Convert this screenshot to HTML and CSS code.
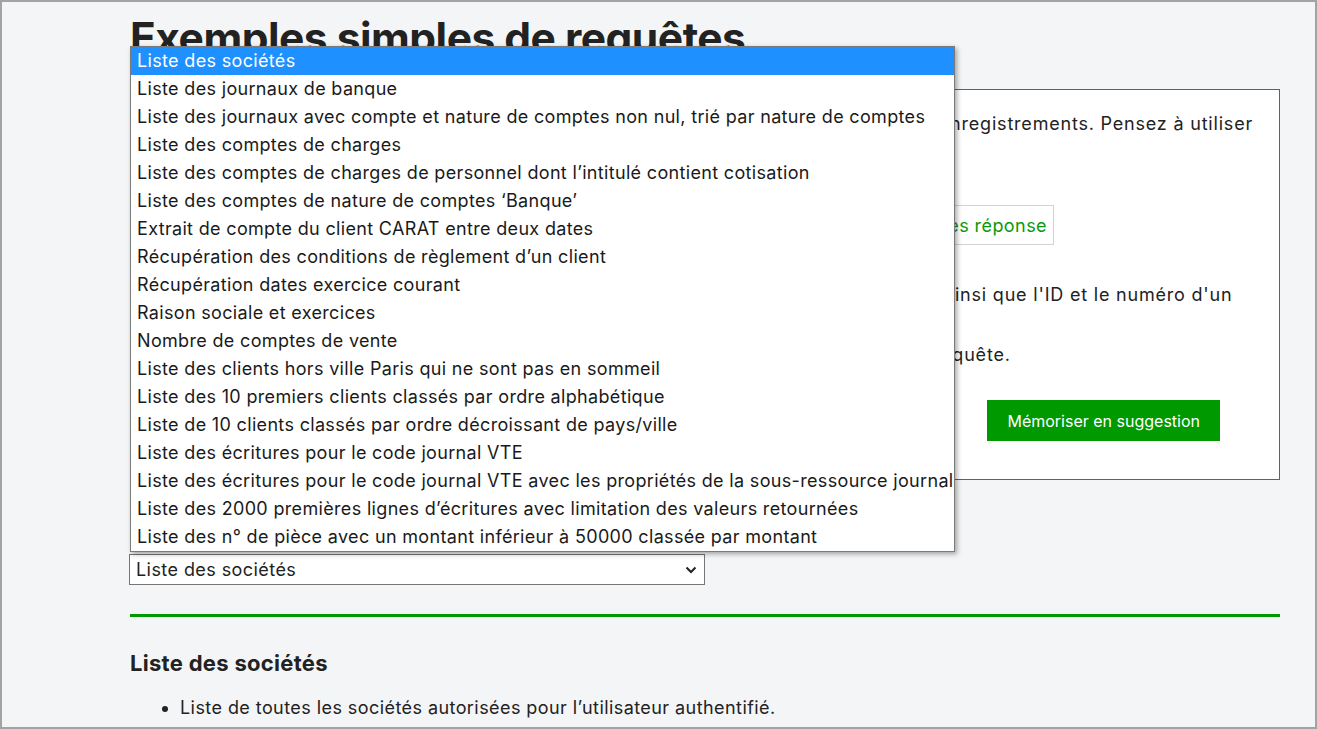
FILE: index.html
```html
<!DOCTYPE html>
<html lang="fr">
<head>
<meta charset="utf-8">
<title>Exemples simples de requêtes</title>
<link rel="stylesheet" href="styles.css">
</head>
<body>
<div class="frame">
  <main class="content">
    <h1 class="title">Exemples simples de requêtes</h1>

    <section class="card">
      <p class="card-text">Par défaut les requêtes émises à l'API renvoient une page incluant au maximum cent enregistrements. Pensez à utiliser<br>les paramètres de pagination pour obtenir la suite.</p>
      <div class="link-row">
        <a class="outline-btn">Exécuter la requête</a>
        <a class="outline-btn">Copier l'URL de la requête</a>
        <a class="outline-btn">Afficher les en-têtes réponse</a>
      </div>
      <p class="card-text spaced">La réponse donne au format JSON la liste des sociétés et leurs propriétés générales, ainsi que l'ID et le numéro d'un<br>élément permettant d'identifier la société interrogée.<br>Ces informations sont nécessaires pour construire l'URL des appels futurs sur cette requête.</p>
      <div class="actions">
        <button class="primary-btn">Mémoriser en suggestion</button>
      </div>
    </section>

    <label class="select-label">Choisissez un exemple de requête :</label>
    <div class="select">
      <span>Liste des sociétés</span>
      <svg class="chevron" width="12" height="8" viewBox="0 0 12 8"><path d="M1.5 1.5 L6 6 L10.5 1.5" fill="none" stroke="#222" stroke-width="2"/></svg>
    </div>

    <hr class="divider">

    <h2 class="subtitle">Liste des sociétés</h2>
    <ul class="bullets">
      <li>Liste de toutes les sociétés autorisées pour l’utilisateur authentifié.</li>
    </ul>

    <ul class="dropdown">
      <li class="opt selected">Liste des sociétés</li>
      <li class="opt">Liste des journaux de banque</li>
      <li class="opt">Liste des journaux avec compte et nature de comptes non nul, trié par nature de comptes</li>
      <li class="opt">Liste des comptes de charges</li>
      <li class="opt">Liste des comptes de charges de personnel dont l’intitulé contient cotisation</li>
      <li class="opt">Liste des comptes de nature de comptes ‘Banque’</li>
      <li class="opt">Extrait de compte du client CARAT entre deux dates</li>
      <li class="opt">Récupération des conditions de règlement d’un client</li>
      <li class="opt">Récupération dates exercice courant</li>
      <li class="opt">Raison sociale et exercices</li>
      <li class="opt">Nombre de comptes de vente</li>
      <li class="opt">Liste des clients hors ville Paris qui ne sont pas en sommeil</li>
      <li class="opt">Liste des 10 premiers clients classés par ordre alphabétique</li>
      <li class="opt">Liste de 10 clients classés par ordre décroissant de pays/ville</li>
      <li class="opt">Liste des écritures pour le code journal VTE</li>
      <li class="opt">Liste des écritures pour le code journal VTE avec les propriétés de la sous-ressource journal</li>
      <li class="opt">Liste des 2000 premières lignes d’écritures avec limitation des valeurs retournées</li>
      <li class="opt">Liste des n° de pièce avec un montant inférieur à 50000 classée par montant</li>
    </ul>
  </main>
</div>
</body>
</html>
```

FILE: styles.css
```css
* { box-sizing: border-box; }

html, body {
  margin: 0;
  padding: 0;
}

body {
  font-family: "Inter", "Noto Sans", "Liberation Sans", sans-serif;
  color: #222;
  font-size: 18px;
  letter-spacing: 0.43px;
}

.frame {
  width: 1317px;
  height: 729px;
  border: 2px solid #a3a3a3;
  background: #f4f5f7;
  overflow: hidden;
}

.content {
  position: relative;
  width: 1150px;
  margin-left: 128px;
}

.title {
  margin: 0;
  padding-top: 10px;
  font-size: 42.5px;
  line-height: 52px;
  font-weight: 700;
  color: #222;
  letter-spacing: -0.5px;
}

.card {
  margin-top: 25px;
  background: #fff;
  border: 1px solid #2a6db3;
  padding: 19px 20px 38px 20px;
}

.card-text {
  margin: 0;
  line-height: 30px;
  color: #222;
  white-space: nowrap;
  letter-spacing: 0.8px;
}

.card-text.spaced {
  margin-top: 35px;
}

.link-row {
  display: flex;
  justify-content: flex-end;
  gap: 16px;
  margin-top: 36px;
  padding-right: 205px;
}

.outline-btn {
  display: inline-block;
  height: 40px;
  line-height: 39px;
  padding: 0 6px 0 10px;
  border: 1px solid #d3d3d3;
  background: #fff;
  color: #0a9a0a;
  font-size: 18px;
  text-decoration: none;
  white-space: nowrap;
}

.actions {
  display: flex;
  justify-content: flex-end;
  margin-top: 30px;
  padding-right: 39px;
}

.primary-btn {
  height: 41px;
  padding: 0 20px;
  border: 0;
  background: #009900;
  color: #fff;
  font-family: inherit;
  font-size: 16px;
  letter-spacing: 0;
}

.select-label {
  display: block;
  margin-top: 30px;
  line-height: 28px;
  height: 28px;
}

.select {
  margin-top: 16px;
  width: 576px;
  height: 31px;
  margin-left: -1px;
  background: #fff;
  border: 1px solid #767676;
  display: flex;
  align-items: center;
  justify-content: space-between;
  padding: 0 7px 0 6px;
  font-size: 18px;
}

.chevron { display: block; }

.divider {
  margin: 29px 0 0 0;
  border: 0;
  height: 3px;
  background: #009900;
}

.subtitle {
  margin: 31px 0 0 0;
  font-size: 22px;
  line-height: 30px;
  font-weight: 700;
  letter-spacing: 0.3px;
}

.bullets {
  margin: 15px 0 0 0;
  padding-left: 50px;
  line-height: 30px;
}

.dropdown {
  position: absolute;
  left: 0;
  top: 44px;
  width: 825px;
  margin: 0;
  padding: 0;
  list-style: none;
  background: #fff;
  border: 1px solid #7a7a7a;
  box-shadow: 2px 2px 5px rgba(0, 0, 0, 0.35);
  letter-spacing: 0.33px;
}

.opt {
  height: 28px;
  line-height: 28px;
  padding-left: 6px;
  white-space: nowrap;
  overflow: hidden;
  color: #1a1a1a;
}

.opt.selected {
  background: #1e90ff;
  color: #fff;
}
```
